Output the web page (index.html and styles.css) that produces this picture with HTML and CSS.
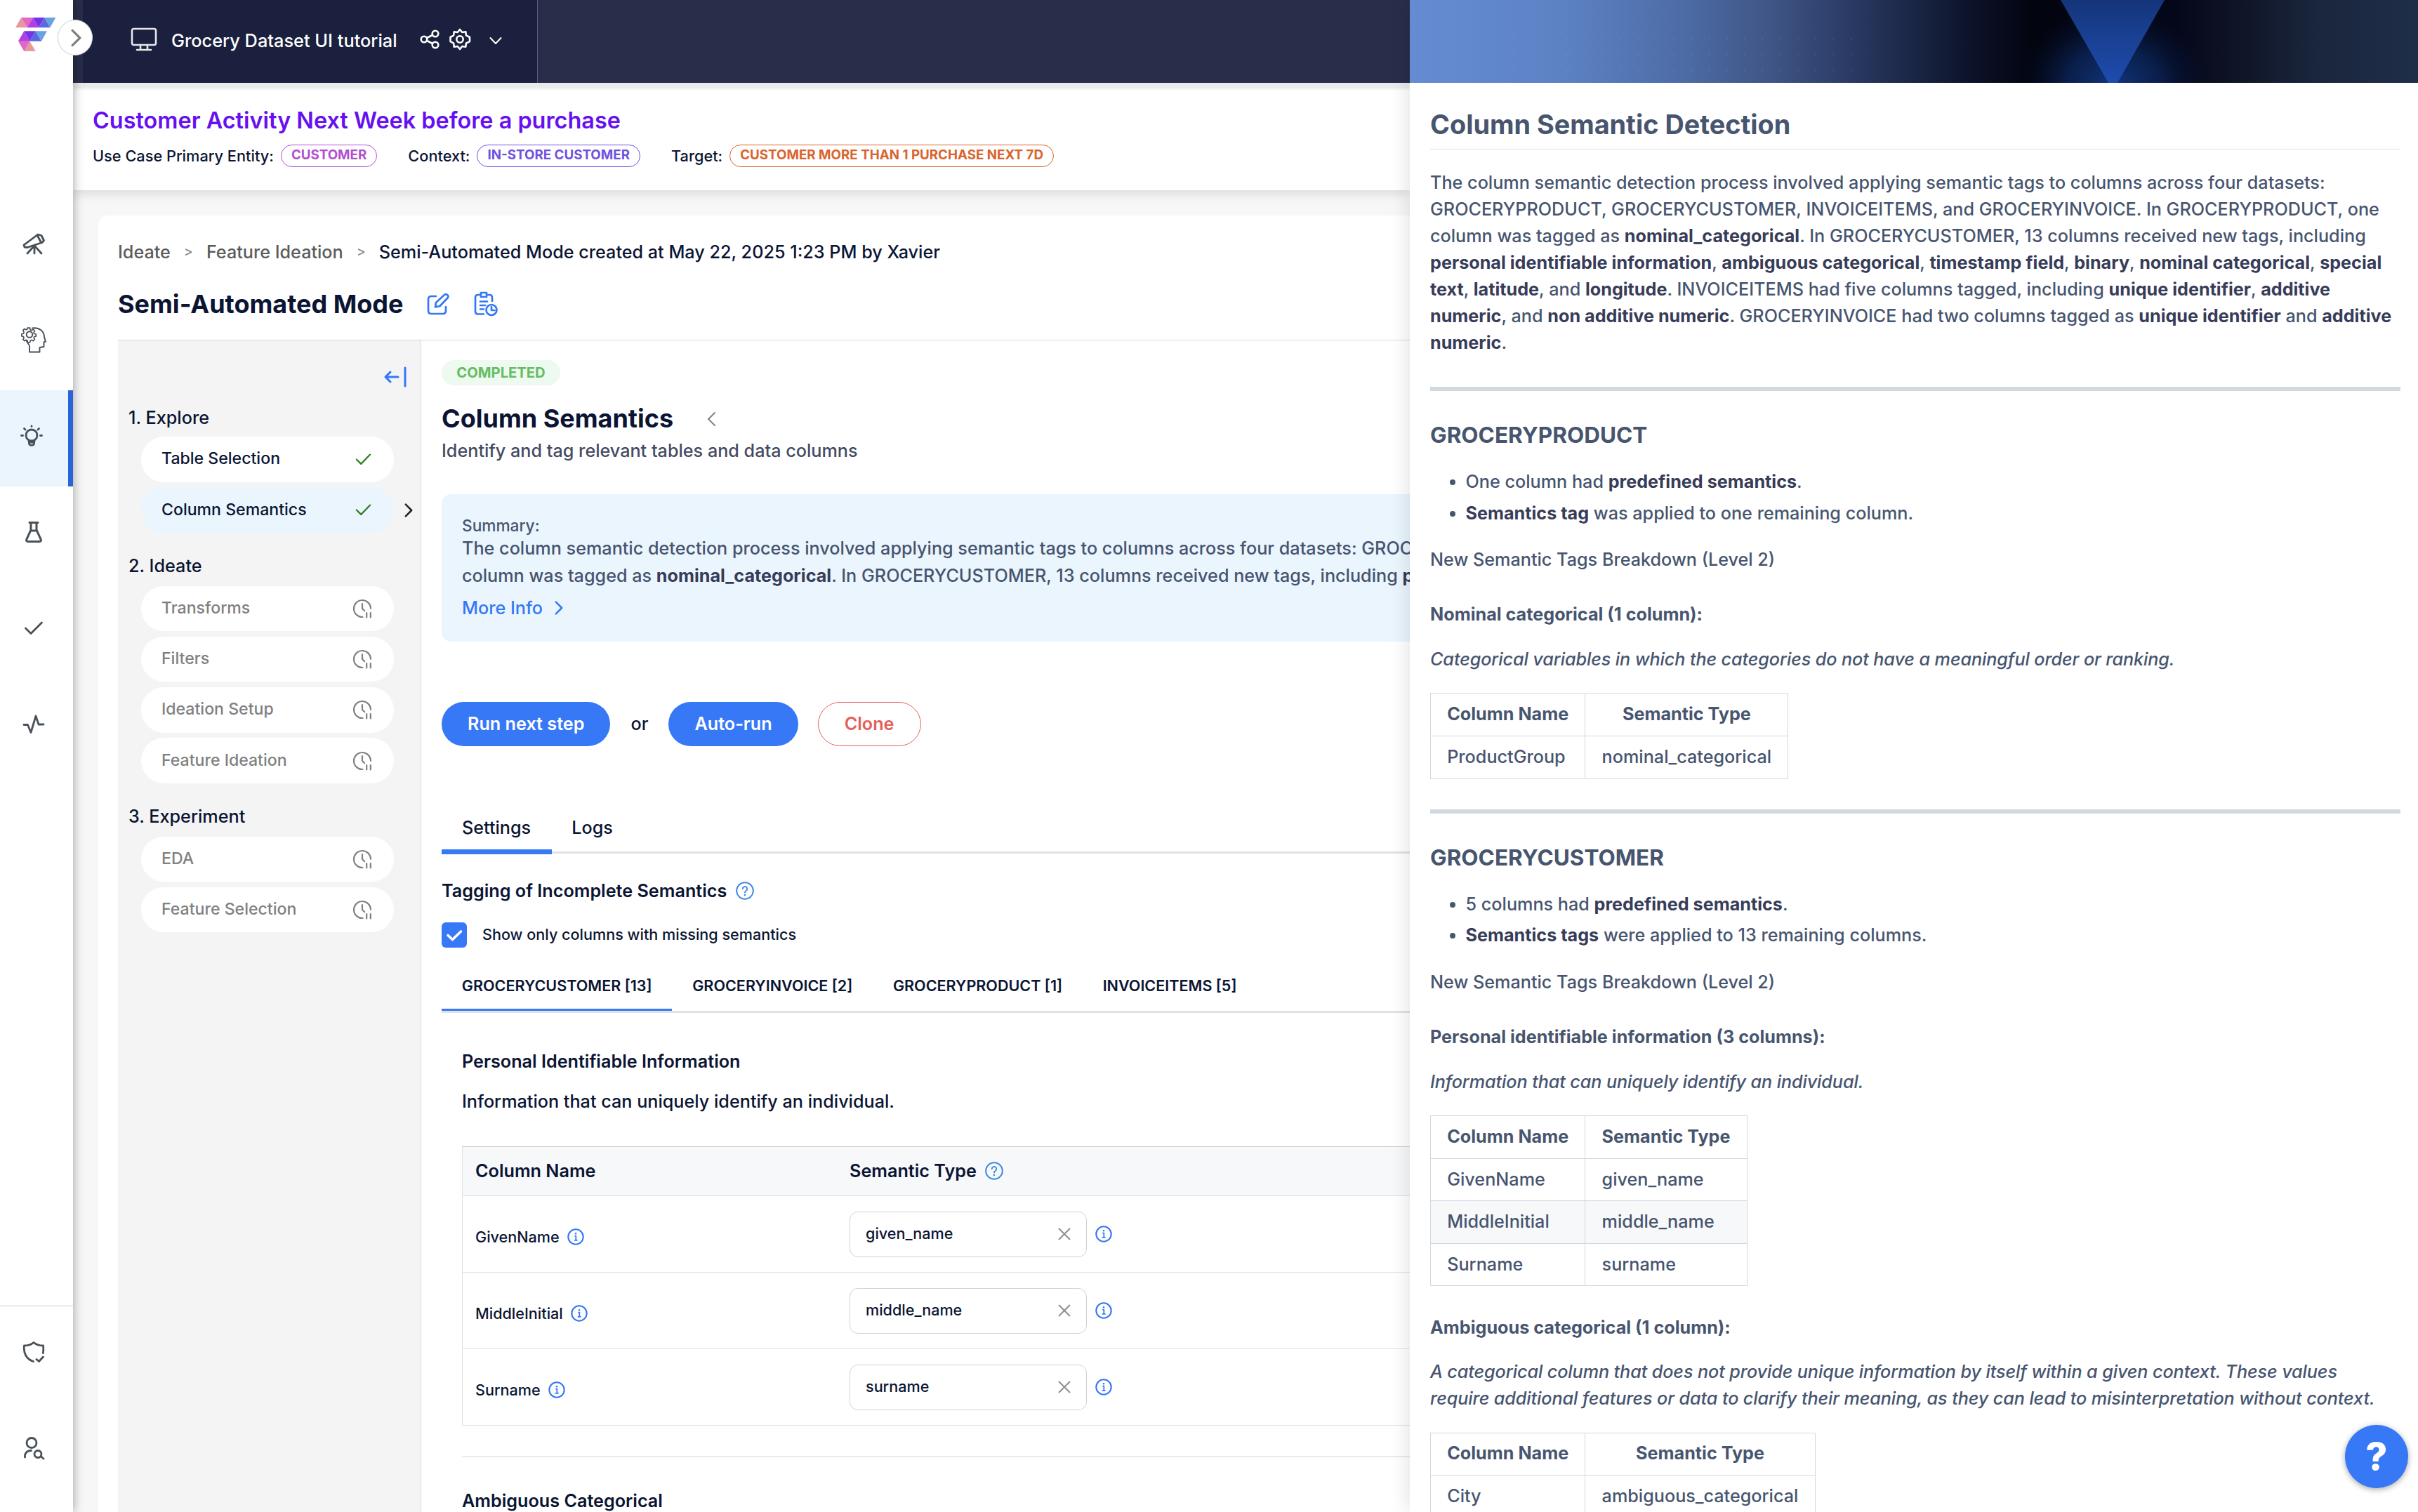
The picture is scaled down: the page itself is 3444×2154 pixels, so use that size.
FILE: index.html
```html
<!DOCTYPE html>
<html lang="en">
<head>
<meta charset="utf-8">
<title>Grocery Dataset UI tutorial</title>
<link rel="stylesheet" href="styles.css">
</head>
<body>
<svg class="defs" width="0" height="0" aria-hidden="true">
  <defs>
    <symbol id="check" viewBox="0 0 24 24"><path d="M1.5 12.5l7 7L22.500 5" fill="none" stroke="currentColor" stroke-width="2.4" stroke-linecap="round" stroke-linejoin="round"/></symbol>
    <symbol id="clock-pause" viewBox="0 0 28 28"><path d="M14.500 26A12 12 0 1 1 26 13.800" fill="none" stroke="currentColor" stroke-width="2.200" stroke-linecap="round"/><path d="M14 7v7l3.200 3.200M20.200 20v6.500M25.800 20v6.500" fill="none" stroke="currentColor" stroke-width="2.200" stroke-linecap="round" stroke-linejoin="round"/></symbol>
    <symbol id="info" viewBox="0 0 24 24"><circle cx="12" cy="12" r="10.700" fill="none" stroke="currentColor" stroke-width="2.100"/><path d="M10.300 10.700h2v6M9.800 16.800h4.800" fill="none" stroke="currentColor" stroke-width="1.800"/><circle cx="12" cy="7.300" r="1.300" fill="currentColor"/></symbol>
    <symbol id="question" viewBox="0 0 24 24"><circle cx="12" cy="12" r="10.900" fill="none" stroke="currentColor" stroke-width="1.900"/><path d="M9 9.500a3 3 0 1 1 4.600 2.500c-1 .700-1.600 1.200-1.600 2.300" fill="none" stroke="currentColor" stroke-width="1.800" stroke-linecap="round"/><circle cx="12" cy="17.500" r="1.200" fill="currentColor"/></symbol>
    <symbol id="cross" viewBox="0 0 18 18"><path d="M1 1l16 16M17 1L1 17" fill="none" stroke="currentColor" stroke-width="2"/></symbol>
    <symbol id="chevron" viewBox="0 0 14 24"><path d="M2 2l10 10L2 22" fill="none" stroke="currentColor" stroke-width="3" stroke-linecap="round" stroke-linejoin="round"/></symbol>
  </defs>
</svg>

<div class="app">
  <aside class="rail">
    <div class="logo">
      <svg width="58" height="50" viewBox="0 0 174 150">
        <path fill="#e6989b" d="M0 43L25 0l25 43zM61 101l-24 43h49z"/>
        <path fill="#e167c4" d="M25 0h50L50 43zM12 101h49l-24 43z"/>
        <path fill="#b13fe2" d="M50 43L75 0l24 43zM12 101l25-43 24 43z"/>
        <path fill="#7632e6" d="M75 0h49L99 43zM37 58h49l-25 43z"/>
        <path fill="#596adf" d="M99 43l25-43 24 43zM61 101l25-43 25 43z"/>
        <path fill="#68a3e1" d="M124 0h48l-24 43zM86 58h49l-24 43z"/>
      </svg>
    </div>
    <nav class="rail-nav">
      <a class="rail-item"><svg width="32" height="32" viewBox="0 0 32 32"><path d="M2 18L22 3l5 1.500 3.500 7-2.500 3L7 21.500l-4-.500zM21 4l5 9.500M17 19v11M16 20L7 30M18 20l9 10"/></svg></a>
      <a class="rail-item"><svg width="36" height="38" viewBox="0 0 36 38"><g stroke-width="1.900"><circle cx="12" cy="11.500" r="4.300"/><path d="M10.500 2.500h4l.500 3 2 1 2.800-1.700 2.500 2.700-1.500 2.500.700 2 3 .700v3.500l-3 .700-.700 1.700 1.500 2.700-2.500 2.500-2.500-1.500-2 .800-.800 3h-3.500l-.700-3-2-.900-2.500 1.600-2.600-2.500 1.600-2.600-.900-2-2.900-.700v-3.500l2.900-.700.900-2L3.200 6.300 5.700 4l2.500 1.500 2-.800z" transform="scale(.87)"/><path d="M16 2.500c10-1.500 17 4.500 17 12.500l2 6.500-2.500 1V29l-6 1v6.500H12V28c0-2-3-4-4-7"/></g></svg></a>
      <a class="rail-item active"><svg width="32" height="32" viewBox="0 0 32 32"><circle cx="16" cy="15" r="8"/><path d="M12 22.500l.600 5c1 2.500 5.800 2.500 6.800 0l.600-5M12.500 25h7M1.500 15.500h2M28.500 15.500h2M16 2v.500M5.500 5.500l1.500 1.500M26.500 5.500L25 7"/></svg></a>
      <a class="rail-item"><svg width="26" height="32" viewBox="0 0 26 32"><path d="M7 2.500h12M9 3v10L3 26c-1 2.500 0 3.500 2 3.500h16c2 0 3-1 2-3.500l-6-13V3M9 14h8" stroke-width="3"/></svg></a>
      <a class="rail-item"><svg width="28" height="28" viewBox="0 0 28 28"><path d="M2.500 14l7.500 7.500L25.500 6"/></svg></a>
      <a class="rail-item"><svg width="32" height="30" viewBox="0 0 32 30"><path d="M2 15.500h5.500l4.500 11L19 3l4 12h7"/></svg></a>
    </nav>
    <nav class="rail-foot">
      <a class="rail-item"><svg width="32" height="32" viewBox="0 0 32 32"><path d="M15.500 29.500C6 26.500 1 18 2.500 7 8 7 12 6 16 2.500 20 6 24 7 29.500 7c.500 4 .500 6.500-.200 10.500M20 26.500l3.500 3 6-6.500"/></svg></a>
      <a class="rail-item"><svg width="32" height="34" viewBox="0 0 32 34"><circle cx="13" cy="9.500" r="7"/><path d="M3.500 30c-.500-6 3-9.500 9-9.500M26.500 29l3.500 3"/><circle cx="22" cy="25.500" r="5"/></svg></a>
    </nav>
    <button class="expand"><svg width="15" height="26" viewBox="0 0 14 24"><use href="#chevron"/></svg></button>
  </aside>

  <div class="workspace">
    <header class="topbar">
      <div class="project">
        <svg class="monitor" width="38" height="34" viewBox="0 0 38 34"><rect x="2" y="2" width="34" height="23" rx="2.500"/><path d="M14 25v6M24 25v6M9 32h20"/></svg>
        <span class="project-name">Grocery Dataset UI tutorial</span>
        <svg class="share" width="28" height="28" viewBox="0 0 28 28"><circle cx="6" cy="14" r="4.300"/><circle cx="22" cy="6" r="4.300"/><circle cx="22" cy="22" r="4.300"/><path d="M10 12l8-4M10 16l8 4"/></svg>
        <svg class="gear" width="32" height="32" viewBox="0 0 32 32"><circle cx="16" cy="16" r="4.700"/><path d="M16 2l3.200 4 5.100-.700.600 5.100L30 13v6l-5.100 2.600-.600 5.100-5.100-.700L16 30l-3.200-4-5.100.700-.600-5.100L2.500 19v-6l4.600-2.600.600-5.100 5.100.700z"/></svg>
        <svg class="caret" width="18" height="12" viewBox="0 0 18 12"><path d="M1.500 2l7.500 8 7.500-8"/></svg>
      </div>
    </header>
    <section class="usecase">
      <h2>Customer Activity Next Week before a purchase</h2>
      <div class="facts">
        <span>Use Case Primary Entity:</span><b class="tag pink">CUSTOMER</b>
        <span>Context:</span><b class="tag violet">IN-STORE CUSTOMER</b>
        <span>Target:</span><b class="tag orange">CUSTOMER MORE THAN 1 PURCHASE NEXT 7D</b>
      </div>
    </section>

    <main class="card">
      <div class="crumbs"><span>Ideate</span><i>&gt;</i><span>Feature Ideation</span><i>&gt;</i><span class="here">Semi-Automated Mode created at May 22, 2025 1:23 PM by Xavier</span></div>
      <div class="heading">
        <h1>Semi-Automated Mode</h1>
        <svg class="edit" width="32" height="32" viewBox="0 0 32 32"><path d="M13 5H6.500C3.500 5 2 6.500 2 9.500v16C2 28.500 3.500 30 6.500 30h16c3 0 4.500-1.500 4.500-4.500V20M12 20.500l1-6.500L25 3c3-2.500 7 1.500 4.500 4.500L18.500 19z"/></svg>
        <svg class="report" width="34" height="36" viewBox="0 0 34 36"><path d="M8.500 5H6C3.500 5 2 6.500 2 9v19.500C2 31 3.500 32.500 6 32.500h8M19 5h3c2.500 0 4 1.500 4 4v5M10 2h8v6h-8zM9 14.500h10M9 20h7M9 25.500h5"/><circle cx="25" cy="26.500" r="7.500"/><path d="M25 22v5h4.500"/></svg>
      </div>

      <div class="body">
        <aside class="steps">
          <div class="collapse"><svg width="32" height="30" viewBox="0 0 32 30"><path d="M20 15H2.500M9 8l-7 7 7 7M30 2v26"/></svg></div>
          <h3>1. Explore</h3>
          <div class="step done">Table Selection<svg width="25" height="22"><use href="#check"/></svg></div>
          <div class="step done current">Column Semantics<svg width="25" height="22"><use href="#check"/></svg>
            <svg class="pointer" width="12" height="20"><use href="#chevron"/></svg></div>
          <h3>2. Ideate</h3>
          <div class="step">Transforms<svg width="28" height="28"><use href="#clock-pause"/></svg></div>
          <div class="step">Filters<svg width="28" height="28"><use href="#clock-pause"/></svg></div>
          <div class="step">Ideation Setup<svg width="28" height="28"><use href="#clock-pause"/></svg></div>
          <div class="step">Feature Ideation<svg width="28" height="28"><use href="#clock-pause"/></svg></div>
          <h3>3. Experiment</h3>
          <div class="step">EDA<svg width="28" height="28"><use href="#clock-pause"/></svg></div>
          <div class="step">Feature Selection<svg width="28" height="28"><use href="#clock-pause"/></svg></div>
        </aside>

        <section class="detail">
          <span class="status">COMPLETED</span>
          <div class="detail-head"><h2>Column Semantics</h2><svg width="13" height="22" viewBox="0 0 13 22"><path d="M11 2L2 11l9 9"/></svg></div>
          <p class="lede">Identify and tag relevant tables and data columns</p>

          <div class="summary">
            <h4>Summary:</h4>
            <p>The column semantic detection process involved applying semantic tags to columns across four datasets: GROCERYPRODUCT,<br>column was tagged as <strong>nominal_categorical</strong>. In GROCERYCUSTOMER, 13 columns received new tags, including <strong>personal</strong></p>
            <a class="more">More Info<svg width="12" height="20"><use href="#chevron"/></svg></a>
          </div>

          <div class="actions">
            <button class="btn">Run next step</button><span class="or">or</span><button class="btn">Auto-run</button><button class="btn clone">Clone</button>
          </div>

          <div class="tabs"><a class="tab on">Settings</a><a class="tab">Logs</a></div>

          <h5 class="tagging">Tagging of Incomplete Semantics<svg width="26" height="26"><use href="#question"/></svg></h5>
          <label class="only"><span class="box"><svg width="36" height="36" viewBox="0 0 36 36"><path d="M9 18.500l6.500 6L27.500 13"/></svg></span>Show only columns with missing semantics</label>

          <div class="subtabs"><a class="subtab on">GROCERYCUSTOMER [13]</a><a class="subtab">GROCERYINVOICE [2]</a><a class="subtab">GROCERYPRODUCT [1]</a><a class="subtab">INVOICEITEMS [5]</a></div>

          <div class="group">
            <h5>Personal Identifiable Information</h5>
            <p>Information that can uniquely identify an individual.</p>
            <div class="grid">
              <div class="grid-head"><span class="name">Column Name</span><span class="type">Semantic Type<svg width="26" height="26"><use href="#question"/></svg></span></div>
              <div class="grid-row"><span class="name">GivenName<svg width="24" height="24"><use href="#info"/></svg></span><span class="type"><span class="select">given_name<svg width="18" height="18"><use href="#cross"/></svg></span><svg width="24" height="24"><use href="#info"/></svg></span></div>
              <div class="grid-row"><span class="name">MiddleInitial<svg width="24" height="24"><use href="#info"/></svg></span><span class="type"><span class="select">middle_name<svg width="18" height="18"><use href="#cross"/></svg></span><svg width="24" height="24"><use href="#info"/></svg></span></div>
              <div class="grid-row"><span class="name">Surname<svg width="24" height="24"><use href="#info"/></svg></span><span class="type"><span class="select">surname<svg width="18" height="18"><use href="#cross"/></svg></span><svg width="24" height="24"><use href="#info"/></svg></span></div>
            </div>
            <hr>
            <h5>Ambiguous Categorical</h5>
          </div>
        </section>
      </div>
    </main>
  </div>

  <aside class="drawer">
    <svg class="banner" width="1436" height="118" viewBox="0 0 1436 118">
      <defs>
        <linearGradient id="sky" x1="0" x2="1" y1="0" y2="0"><stop offset="0" stop-color="#658bd2"/><stop offset=".15" stop-color="#5d82c4"/><stop offset=".27" stop-color="#4d6ca6"/><stop offset=".36" stop-color="#3f5585"/><stop offset=".44" stop-color="#293962"/><stop offset=".5" stop-color="#1a2644"/><stop offset=".56" stop-color="#0c1128"/><stop offset=".62" stop-color="#02040f"/><stop offset=".76" stop-color="#04071a"/><stop offset=".82" stop-color="#0f1426"/><stop offset=".9" stop-color="#1a263d"/><stop offset="1" stop-color="#1f2e48"/></linearGradient>
        <radialGradient id="glow"><stop offset="0" stop-color="#12367f"/><stop offset=".5" stop-color="#0b2457" stop-opacity=".8"/><stop offset="1" stop-color="#04102c" stop-opacity="0"/></radialGradient>
        <linearGradient id="beam" x1="0" x2="0" y1="0" y2="1"><stop offset="0" stop-color="#15347a"/><stop offset=".4" stop-color="#193f90"/><stop offset="1" stop-color="#1e4bad"/></linearGradient>
        <pattern id="dots" width="25.300" height="22.500" patternUnits="userSpaceOnUse" x="9" y="44"><circle cx="12.600" cy="11.200" r="1.300" fill="#8fa9dc" opacity=".13"/></pattern>
      </defs>
      <rect width="1436" height="118" fill="url(#sky)"/>
      <rect x="9" y="44" width="632" height="68" fill="url(#dots)"/>
      <ellipse cx="1002" cy="122" rx="135" ry="115" fill="url(#glow)"/>
      <path d="M927 0h148l-67 118h-13z" fill="url(#beam)"/>
    </svg>
    <article class="md">
      <h1>Column Semantic Detection</h1>
      <p>The column semantic detection process involved applying semantic tags to columns across four datasets: GROCERYPRODUCT, GROCERYCUSTOMER, INVOICEITEMS, and GROCERYINVOICE. In GROCERYPRODUCT, one column was tagged as <strong>nominal_categorical</strong>. In GROCERYCUSTOMER, 13 columns received new tags, including <strong>personal identifiable information</strong>, <strong>ambiguous categorical</strong>, <strong>timestamp field</strong>, <strong>binary</strong>, <strong>nominal categorical</strong>, <strong>special text</strong>, <strong>latitude</strong>, and <strong>longitude</strong>. INVOICEITEMS had five columns tagged, including <strong>unique identifier</strong>, <strong>additive numeric</strong>, and <strong>non additive numeric</strong>. GROCERYINVOICE had two columns tagged as <strong>unique identifier</strong> and <strong>additive numeric</strong>.</p>
      <hr>
      <h3>GROCERYPRODUCT</h3>
      <ul>
        <li>One column had <strong>predefined semantics</strong>.</li>
        <li><strong>Semantics tag</strong> was applied to one remaining column.</li>
      </ul>
      <p>New Semantic Tags Breakdown (Level 2)</p>
      <h4>Nominal categorical (1 column):</h4>
      <p><em>Categorical variables in which the categories do not have a meaningful order or ranking.</em></p>
      <table>
        <tr><th>Column Name</th><th>Semantic Type</th></tr>
        <tr><td>ProductGroup</td><td>nominal_categorical</td></tr>
      </table>
      <hr>
      <h3>GROCERYCUSTOMER</h3>
      <ul>
        <li>5 columns had <strong>predefined semantics</strong>.</li>
        <li><strong>Semantics tags</strong> were applied to 13 remaining columns.</li>
      </ul>
      <p>New Semantic Tags Breakdown (Level 2)</p>
      <h4>Personal identifiable information (3 columns):</h4>
      <p><em>Information that can uniquely identify an individual.</em></p>
      <table>
        <tr><th>Column Name</th><th>Semantic Type</th></tr>
        <tr><td>GivenName</td><td>given_name</td></tr>
        <tr class="alt"><td>MiddleInitial</td><td>middle_name</td></tr>
        <tr><td>Surname</td><td>surname</td></tr>
      </table>
      <h4>Ambiguous categorical (1 column):</h4>
      <p><em>A categorical column that does not provide unique information by itself within a given context. These values require additional features or data to clarify their meaning, as they can lead to misinterpretation without context.</em></p>
      <table>
        <tr><th>Column Name</th><th>Semantic Type</th></tr>
        <tr><td>City</td><td>ambiguous_categorical</td></tr>
      </table>
    </article>
  </aside>
  <button class="help">?</button>
</div>
</body>
</html>
```
FILE: styles.css
```css
* { box-sizing: border-box; margin: 0; padding: 0; }
body { font: 500 25.2px/37.8px Inter, "Liberation Sans", sans-serif; color: #0b1533; }
button { font: inherit; border: 0; background: none; }
svg { flex: none; display: block; }
.defs { position: absolute; }

.app {
  position: relative;
  display: grid;
  grid-template-columns: 104px minmax(0, 1fr) 1436px;
  width: 3444px;
  height: 2154px;
  overflow: hidden;
}

/* Navigation rail */
.rail {
  position: relative;
  z-index: 3;
  display: flex;
  flex-direction: column;
  height: 2154px;
  background: #fff;
  box-shadow: 0 0 14px rgba(0, 0, 0, .38);
}
.logo { height: 282px; padding: 25px 0 0 22px; }
.rail-nav { flex: 1; }
.rail-foot { height: 294px; border-top: 1px solid #c9cdd1; }
.rail-item {
  display: flex;
  align-items: center;
  justify-content: center;
  height: 137px;
  padding: 0 8px 8px 0;
  color: #495057;
}
.rail-foot .rail-item { height: 143px; padding-bottom: 0; }
.rail-foot .rail-item:first-child { height: 130px; }
.rail-item.active { background: #eaf5fe; border-right: 7px solid #2962d9; }
.rail-item svg { fill: none; stroke: currentColor; stroke-width: 2.8; stroke-linecap: round; stroke-linejoin: round; }
.expand {
  position: absolute;
  left: 82px;
  top: 28px;
  display: flex;
  align-items: center;
  justify-content: center;
  width: 50px;
  height: 51px;
  padding-left: 2px;
  border: 1px solid #ced2da;
  border-radius: 50%;
  background: #fff;
  color: #808080;
}

/* Top bar */
.workspace { height: 2154px; overflow: hidden; background: #f7f7f8; }
.topbar { position: relative; z-index: 2; height: 118px; padding-left: 14px; background: #282e4a; box-shadow: 0 9px 3px rgba(40, 46, 74, .1); }
.project {
  display: flex;
  align-items: center;
  width: 648px;
  height: 118px;
  padding: 0 0 6px 68px;
  background: #1a203d;
  border-right: 1px solid #5a6075;
  color: #fff;
}
.project svg { fill: none; stroke: #fff; stroke-width: 2.6; stroke-linecap: round; stroke-linejoin: round; }
.project-name { margin: 4px 32px 0 20px; font-size: 25.35px; }
.project .gear { margin: 0 26px 0 13px; }
.project .caret { margin-top: 4px; stroke-width: 2; }
.project .monitor { stroke: #e8e8ea; }

.usecase {
  position: relative;
  z-index: 1;
  height: 153px;
  padding: 31px 0 0 28px;
  background: #fff;
  box-shadow: 0 4px 16px rgba(0, 0, 0, .13);
}
.usecase h2 { font-size: 32.4px; line-height: 46px; font-weight: 600; color: #6610f2; }
.facts { display: flex; align-items: center; gap: 10px; margin-top: 11px; font-size: 21.75px; line-height: 31px; white-space: nowrap; }
.tag { height: 32px; padding: 0 14px; border: 1.500px solid; border-radius: 16px; font-size: 18.75px; line-height: 28px; font-weight: 700; margin-right: 34px; }
.pink { color: #b14fd0; }
.violet { color: #6f52e0; }
.orange { color: #d9642d; }

/* Card */
.card { width: 3268px; height: 1900px; margin: 36px 0 0 36px; padding: 33px 28px 0; background: #fff; border-radius: 14px; }
.crumbs { display: flex; color: #5c5c5c; white-space: nowrap; line-height: 38px; }
.crumbs i { width: 51px; text-align: center; font-style: normal; font-size: 19px; color: #8a8a8a; }
.crumbs .here { color: #0b1533; }
.heading { display: flex; align-items: center; height: 107px; border-bottom: 1px solid #d6d8db; }
.heading h1 { font-size: 36px; line-height: 45px; font-weight: 700; margin-right: 34px; margin-top: 5px; }
.heading svg { fill: none; stroke: #3478f6; stroke-width: 2.700; stroke-linecap: round; stroke-linejoin: round; margin-top: 4px; }
.report { margin-left: 35px; }

.body { display: flex; }
.steps { width: 432px; height: 1700px; padding: 37px 38px 0 33px; background: #f4f4f4; border-right: 1px solid #dfe0e2; }
.collapse { display: flex; justify-content: flex-end; margin-right: -18px; height: 54px; }
.collapse svg { fill: none; stroke: #3478f6; stroke-width: 3; stroke-linecap: round; stroke-linejoin: round; }
.steps h3 { margin: 0 0 8px -18px; font-size: 25.2px; line-height: 38px; font-weight: 500; }
.step + h3 { margin-top: 28.500px; margin-bottom: 9.500px; }
.step {
  position: relative;
  display: flex;
  align-items: center;
  justify-content: space-between;
  height: 64.5px;
  margin-bottom: 7.700px;
  padding: 0 31px 0 29px;
  border-radius: 33px;
  background: #fff;
  color: #808080;
  font-size: 23.1px;
}
.step.done { color: #0b1533; }
.done > svg { color: #2f7d1d; }
.step.current { background: #eaf5fe; }
.step .pointer { position: absolute; right: -27px; top: 23px; color: #222; }

/* Detail column */
.detail { flex: 1; min-width: 0; padding: 28px 0 0 29px; }
.status { display: block; width: 169px; height: 36px; border-radius: 18px; background: #eef9ef; color: #64bd63; font-size: 20.2px; line-height: 35px; font-weight: 700; text-align: center; }
.detail-head { display: flex; align-items: center; margin-top: 25px; }
.detail-head h2 { font-size: 36px; line-height: 45px; font-weight: 700; margin-right: 48px; }
.detail-head svg { fill: none; stroke: #858585; stroke-width: 2; stroke-linecap: round; }
.lede { margin-top: 4px; line-height: 38px; color: #454b63; }
.summary { height: 210px; margin-top: 43px; padding: 31px 29px 0; border-radius: 14px; background: #eaf5fe; color: #47546e; }
.summary h4 { font-size: 22.7px; line-height: 27px; font-weight: 500; }
.summary p { line-height: 39px; white-space: nowrap; }
strong { font-weight: 700; color: #373c58; }
.more { display: flex; align-items: center; gap: 17px; margin-top: 7px; line-height: 38px; color: #3478f6; }
.actions { display: flex; align-items: center; margin-top: 86px; }
.btn { height: 63px; padding: 0 37px; border-radius: 32px; background: #3778f7; color: #fff; font-weight: 600; font-size: 25.2px; }
.or { margin: 0 29px; }
.clone { margin-left: 28px; border: 1.500px solid #e5605a; background: #fff; color: #e5605a; }

.tabs { display: flex; margin-top: 97px; border-bottom: 3px solid #dee2e6; }
.tab { height: 57px; margin-bottom: -4px; padding: 0 29px; line-height: 38px; border-bottom: 7px solid transparent; }
.tab.on { border-color: #3778f7; padding-right: 30px; }
.tab.on + .tab { padding-left: 28px; }
h5 { font-size: 25.2px; line-height: 38px; font-weight: 600; }
.tagging { display: flex; align-items: center; gap: 13px; margin-top: 34px; }
.tagging svg, .grid-head svg { color: #3f8be0; }
.only { display: flex; align-items: center; gap: 22px; height: 36px; margin-top: 26px; font-size: 21.6px; }
.box { border-radius: 6px; background: #3778f7; }
.box svg { fill: none; stroke: #fff; stroke-width: 3.600; stroke-linecap: round; stroke-linejoin: round; }
.subtabs { display: flex; margin-top: 36px; border-bottom: 3px solid #dee2e6; }
.subtab { padding: 0 28.800px 15px; border-bottom: 3px solid transparent; font-size: 21.55px; line-height: 36px; font-weight: 600; }
.subtab.on { border-color: #3778f7; }

.group { padding: 50px 29px 0; }
.group > p { margin-top: 19px; line-height: 38px; }
.grid { margin-top: 45px; border-top: 1px solid #c9cdd1; border-left: 1px solid #dee2e6; }
.grid-head { display: flex; align-items: center; height: 70px; background: #f6f8fa; border-bottom: 1px solid #dee2e6; font-weight: 600; }
.grid-row { display: flex; align-items: center; height: 109px; border-bottom: 1px solid #dee2e6; font-size: 21.6px; }
.name, .type { display: flex; align-items: center; gap: 12px; }
.name { width: 551px; padding-left: 18px; }
.grid-row .name { padding-top: 9px; gap: 11px; }
.grid-row svg { color: #3778f7; }
.select { display: flex; align-items: center; justify-content: space-between; width: 338px; height: 65px; padding: 0 22px; border: 1px solid #ced2d6; border-radius: 12px; }
.grid-row .select svg { color: #8f8f8f; }
.group hr { height: 1px; border: 0; margin: 44px 0 43px; background: #ccd1d6; }

/* Drawer */
.drawer { position: relative; z-index: 4; height: 2154px; overflow: hidden; background: #fff; box-shadow: -2px 0 26px rgba(0, 0, 0, .12); }
.md { padding: 36px 25px 0 29px; color: #47556f; line-height: 37.950px; }
.md > * { margin-bottom: 28.800px; }
.md h1 { padding-bottom: 11px; border-bottom: 1px solid #dce1e6; font-size: 37.800px; line-height: 47.200px; font-weight: 700; }
.md hr { height: 6px; margin: 43.200px 0; border: 0; background: #d1d9e0; }
.md h3 { font-size: 31.500px; line-height: 39.400px; font-weight: 700; }
.md h4 { margin-top: 43.200px; font-size: 25.200px; line-height: 31.500px; font-weight: 700; }
.md em { letter-spacing: -.1px; }
.md ul { padding-left: 50.500px; }
.md li + li { margin-top: 6.300px; }
.md table { border-collapse: collapse; }
.md th, .md td { padding: 10.800px 23.200px; border: 1px solid #d1d9e0; font-weight: 500; }
.md th { font-weight: 700; text-align: center; }
.md .alt { background: #f6f8fa; }

.help {
  position: absolute;
  z-index: 5;
  right: 14px;
  bottom: 34px;
  width: 90px;
  height: 90px;
  border-radius: 50%;
  background: #3778f7;
  color: #fff;
  font-size: 54px;
  font-weight: 800;
  line-height: 90px;
  box-shadow: 0 2px 8px rgba(0, 0, 0, .35);
}
```
